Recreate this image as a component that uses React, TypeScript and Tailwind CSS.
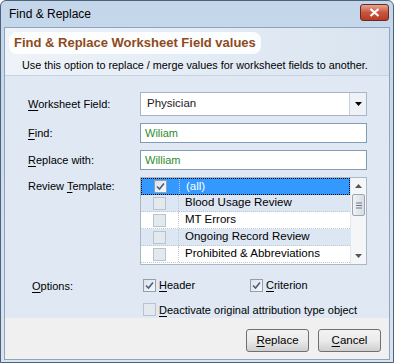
import React from "react"

const font = { fontFamily: "'Liberation Sans', Arial, sans-serif" }

const Check = ({ checked, disabled }: { checked?: boolean; disabled?: boolean }) => (
  <span
    className={`inline-flex h-[13px] w-[13px] shrink-0 items-center justify-center border ${
      disabled ? "border-[#b8c3cf] bg-[#e4e9ee]" : "border-[#8f9fb0] bg-gradient-to-br from-[#dde3ea] to-[#f6f8fa]"
    }`}
  >
    {checked && (
      <svg width="9" height="9" viewBox="0 0 9 9">
        <path d="M1 4.5 L3.5 7 L8 1.5" fill="none" stroke="#4a5f80" strokeWidth="1.6" />
      </svg>
    )}
  </span>
)

const U = ({ children }: { children: React.ReactNode }) => <span className="underline underline-offset-2">{children}</span>

const rows = [
  { label: "(all)", checked: true, sel: true },
  { label: "Blood Usage Review", alt: true },
  { label: "MT Errors" },
  { label: "Ongoing Record Review", alt: true },
  { label: "Prohibited & Abbreviations" },
]

export default function App() {
  return (
    <div className="h-[363px] w-[394px] overflow-hidden bg-white" style={font}>
      <div className="flex h-full w-full flex-col rounded-t-[6px] border border-[#4d6178] bg-gradient-to-b from-[#c4d6ea] to-[#d9e4f1] px-[3px] pb-[3px]">
        {/* title bar */}
        <div className="flex h-[26px] shrink-0 items-center justify-between pl-[5px] pr-[1px]">
          <span className="text-[12px] text-black">Find &amp; Replace</span>
          <div className="mb-[4px] flex h-[17px] w-[29px] items-center justify-center rounded-[3px] border border-[#6b2a20] bg-gradient-to-b from-[#e8a393] via-[#c9553e] to-[#b83b22]">
            <svg width="11" height="9" viewBox="0 0 11 9">
              <path d="M1.5 1 L9.5 8 M9.5 1 L1.5 8" stroke="white" strokeWidth="2.2" />
            </svg>
          </div>
        </div>
        {/* client */}
        <div className="flex flex-1 flex-col border border-[#8ea4bc] bg-[#f0f0f0]">
          {/* header */}
          <div className="h-[48px] shrink-0 border-b border-[#c7d3e0] bg-gradient-to-r from-[#eef3f9] via-[#e4ecf5] to-[#d9e4f0] pt-[2px]">
            <div className="ml-[4px] inline-block rounded-[8px] bg-white/90 px-[5px] py-[1px] text-[13px] font-bold text-[#8e4a1c]">
              Find &amp; Replace Worksheet Field values
            </div>
            <div className="ml-[17px] mt-[3px] whitespace-nowrap text-[10.8px] text-black">
              Use this option to replace / merge values for worksheet fields to another.
            </div>
          </div>
          {/* body */}
          <div className="flex-1 bg-[#dfe8f3] pl-[23px] pr-[22px] pt-[16px] text-[11px] text-black">
            <div className="flex items-center">
              <div className="w-[112px]"><U>W</U>orksheet Field:</div>
              <div className="flex h-[24px] flex-1 items-center border border-[#a7b6c6] bg-white">
                <span className="flex-1 pl-[6px] text-[11.5px] text-[#1a1a1a]">Physician</span>
                <div className="flex h-full w-[17px] items-center justify-center border-l border-[#c8d2dc] bg-[#eef2f6]">
                  <svg width="7" height="4" viewBox="0 0 7 4"><path d="M0 0 H7 L3.5 4Z" fill="#000" /></svg>
                </div>
              </div>
            </div>
            <div className="mt-[7px] flex items-center">
              <div className="w-[112px]"><U>F</U>ind:</div>
              <div className="flex h-[20px] flex-1 items-center border border-[#7f9db9] bg-white pl-[4px] text-[#2e8b2e]">Wiliam</div>
            </div>
            <div className="mt-[7px] flex items-center">
              <div className="w-[112px]"><U>R</U>eplace with:</div>
              <div className="flex h-[20px] flex-1 items-center border border-[#7f9db9] bg-white pl-[4px] text-[#2e8b2e]">William</div>
            </div>
            <div className="mt-[7px] flex items-start">
              <div className="w-[112px] pt-[1px]">Review <U>T</U>emplate:</div>
              <div className="flex h-[88px] flex-1 border border-[#aab8c6] bg-white">
                <div className="flex-1">
                  {rows.map((r) => (
                    <div
                      key={r.label}
                      className={`flex h-[17px] items-center border-b border-dotted border-[#c0c8d0] ${
                        r.sel ? "border border-dotted border-black bg-[#3399ff] text-white" : r.alt ? "bg-[#dde6f3]" : "bg-white"
                      }`}
                    >
                      <div className="flex w-[37px] justify-center">
                        <Check checked={r.checked} disabled={!r.checked} />
                      </div>
                      <div className="h-full w-px border-l border-dotted border-[#c0c8d0]" />
                      <span className="pl-[6px] text-[11.5px]">{r.label}</span>
                    </div>
                  ))}
                </div>
                <div className="flex w-[16px] flex-col items-center border-l border-[#e3e8ee] bg-[#f4f6f8]">
                  <div className="flex h-[16px] items-center justify-center">
                    <svg width="7" height="4" viewBox="0 0 7 4"><path d="M0 4 H7 L3.5 0Z" fill="#555" /></svg>
                  </div>
                  <div className="flex h-[22px] w-[13px] items-center justify-center rounded-[2px] border border-[#9aa6b3] bg-gradient-to-r from-[#eef1f4] to-[#d8dee5]">
                    <svg width="6" height="7" viewBox="0 0 6 7"><path d="M0 1H6M0 3.5H6M0 6H6" stroke="#6b7785" /></svg>
                  </div>
                  <div className="flex-1" />
                  <div className="flex h-[16px] items-center justify-center">
                    <svg width="7" height="4" viewBox="0 0 7 4"><path d="M0 0 H7 L3.5 4Z" fill="#555" /></svg>
                  </div>
                </div>
              </div>
            </div>
            <div className="mt-[12px] flex items-start">
              <div className="w-[115px] pl-[4px] pt-[1px]"><U>O</U>ptions:</div>
              <div className="flex flex-col gap-[8px]">
                <div className="flex items-center">
                  <div className="flex w-[107px] items-center gap-[3px]"><Check checked /><span><U>H</U>eader</span></div>
                  <div className="flex items-center gap-[3px]"><Check checked /><span><U>C</U>riterion</span></div>
                </div>
                <div className="flex items-center gap-[3px] whitespace-nowrap"><Check disabled /><span><U>D</U>eactivate original attribution type object</span></div>
              </div>
            </div>
          </div>
          {/* footer */}
          <div className="flex h-[41px] shrink-0 items-center justify-end gap-[9px] bg-[#f0f0f0] pr-[8px] pt-[4px]">
            {["Replace", "Cancel"].map((b) => (
              <button
                key={b}
                className="h-[23px] w-[63px] rounded-[3px] border border-[#707070] bg-gradient-to-b from-[#f2f2f2] via-[#ebebeb] to-[#cfcfcf] text-[11.5px] text-black"
                style={font}
              >
                <U>{b[0]}</U>{b.slice(1)}
              </button>
            ))}
          </div>
        </div>
      </div>
    </div>
  )
}
